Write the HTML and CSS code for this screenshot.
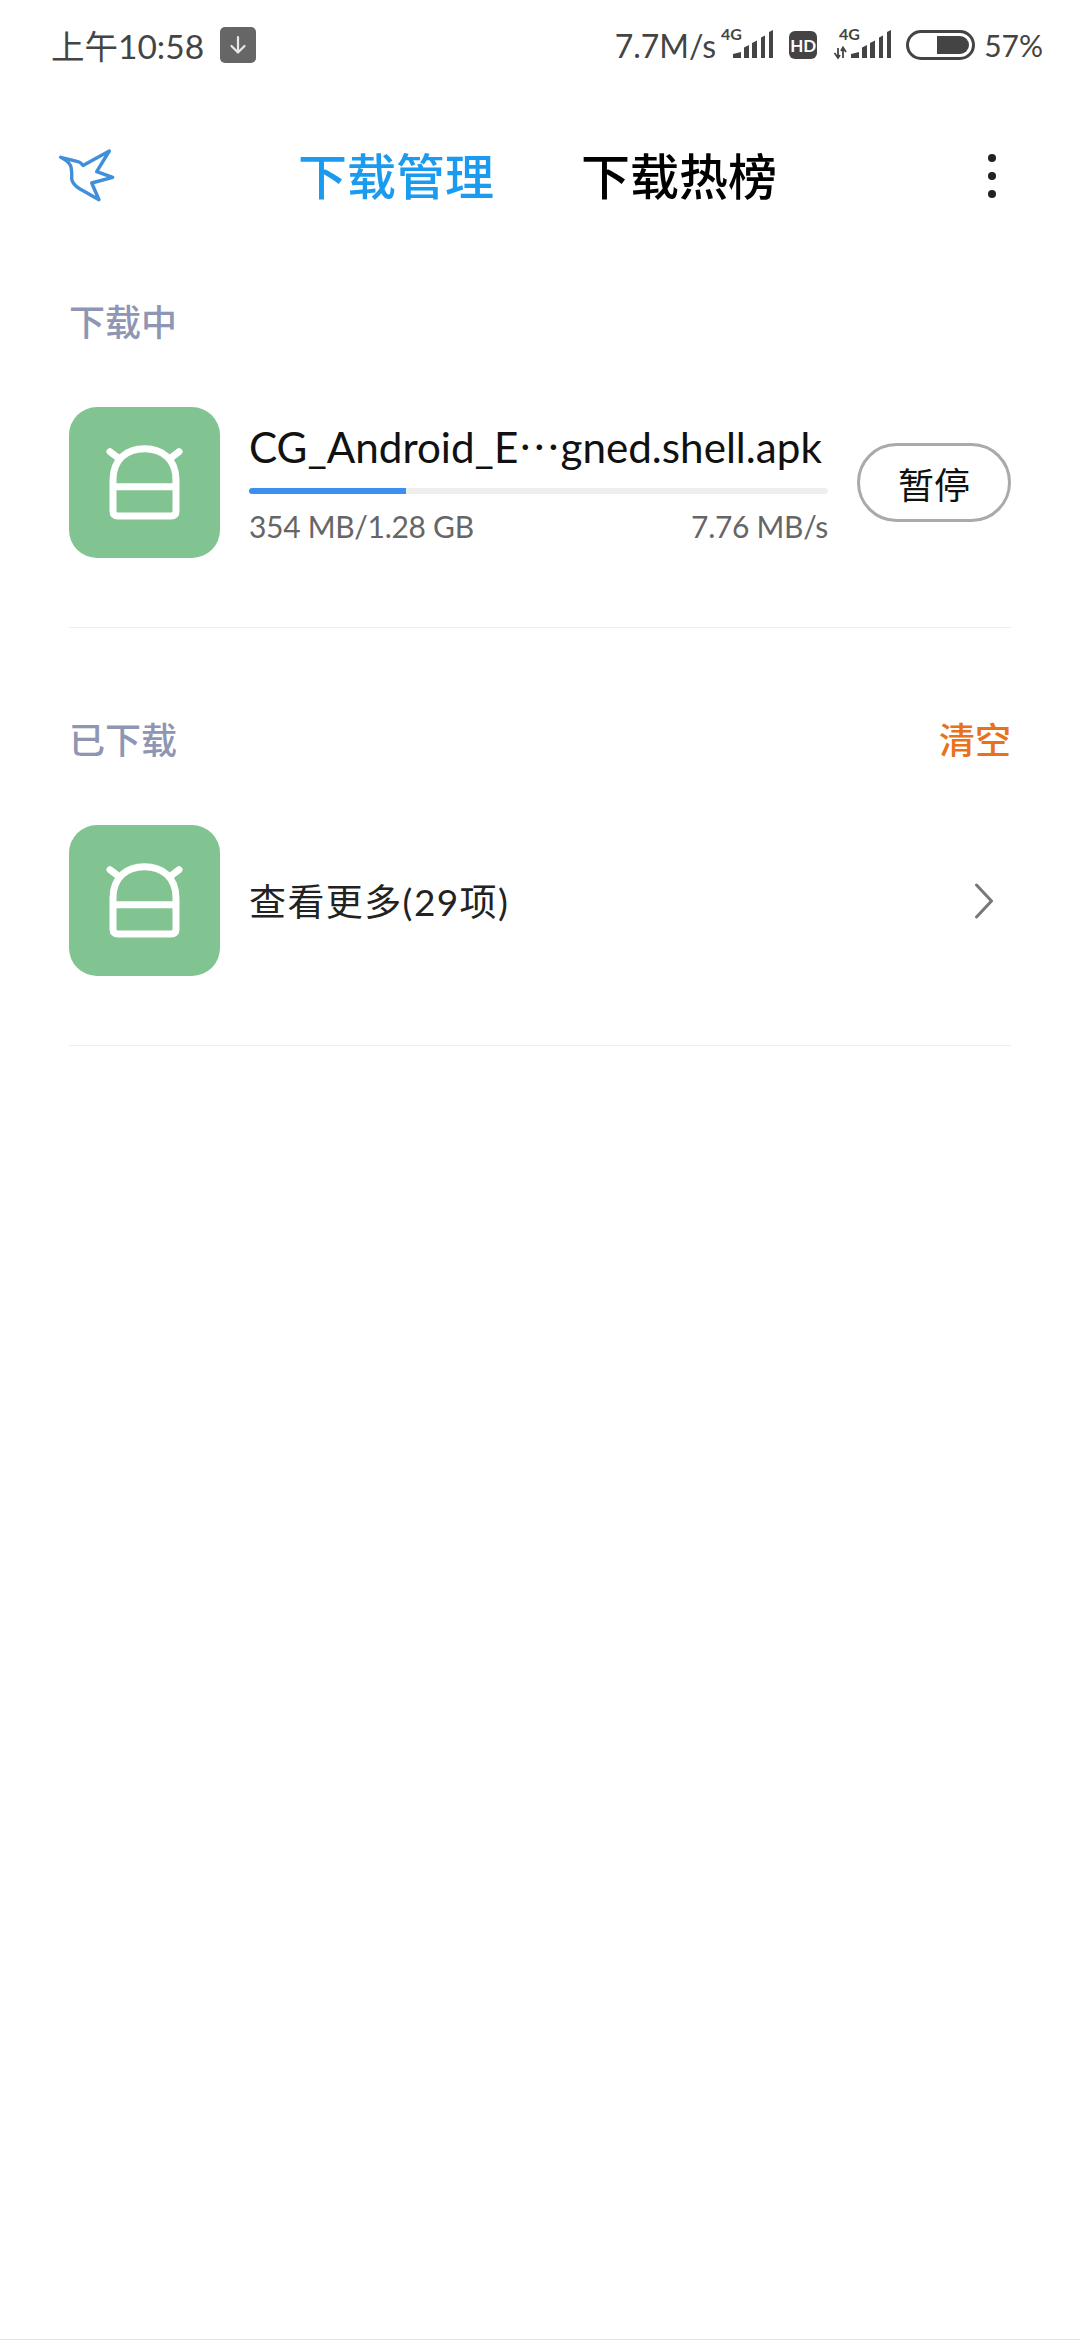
FILE: index.html
```html
<!DOCTYPE html>
<html lang="zh-CN">
<head>
<meta charset="utf-8">
<title>下载管理</title>
<link rel="stylesheet" href="styles.css">
</head>
<body>
<div class="page">
  <header class="status">
    <span class="status-time">上午10:58</span>
    <span class="dl-badge"><svg width="36" height="36" viewBox="0 0 36 36"><path d="M18 10V25M11.500 19L18 25.500L24.500 19" fill="none" stroke="#e8e8e8" stroke-width="2.200" stroke-linecap="round" stroke-linejoin="round"/></svg></span>
    <span class="status-right">
      <span class="status-speed">7.7M/s</span>
      <svg class="sig1" width="54" height="44" viewBox="0 -5 54 44"><text x="0" y="12" class="sig-text">4G</text><path d="M12 30V26L20 24V30ZM23 30V19.500L28 17V30ZM31 30V15L36 12.500V30ZM40 30V9.500L44 7.500V30ZM48 30V4L52 2V30Z" fill="#444"/></svg>
      <span class="hd">HD</span>
      <svg class="sig2" width="60" height="44" viewBox="0 -5 60 44"><text x="6" y="12" class="sig-text">4G</text><path d="M5 30V20M1.500 25L5 30L7 27M10 30V20M8 23L10 19.500L13 24" fill="none" stroke="#444" stroke-width="1.800"/><path d="M18 30V26L26 24V30ZM29 30V19.500L34 17V30ZM37 30V15L42 12.500V30ZM46 30V9.500L50 7.500V30ZM54 30V4L58 2V30Z" fill="#444"/></svg>
      <svg class="batt" width="69" height="30" viewBox="0 0 69 30"><rect x="1.500" y="1.500" width="66" height="27" rx="13.500" fill="none" stroke="#444" stroke-width="3"/><path d="M31 6H54A9 9 0 0 1 54 24H31Z" fill="#444"/></svg>
      <span class="status-pct">57%</span>
    </span>
  </header>

  <nav class="nav">
    <svg class="bird" width="58" height="58" viewBox="58 148 58 58"><path d="M60.700 158.300L77 162.300Q81 163 83 166.500L109.300 152L96.700 172.700L112.700 178.300L91.700 184L99 200.700L80 190Q72.500 185.500 71.700 180Q72 170 70.500 166.500Q68 162 60.700 158.300Z" fill="none" stroke="#3f8fdb" stroke-width="3.400" stroke-linejoin="round" stroke-linecap="round"/></svg>
    <span class="tab tab-active">下载管理</span>
    <span class="tab">下载热榜</span>
    <span class="dots"><i></i><i></i><i></i></span>
  </nav>

  <section class="section">
    <div class="sec-head"><span class="sec-title">下载中</span></div>
    <div class="row">
      <svg class="app" width="151" height="151" viewBox="0 0 151 151"><rect width="151" height="151" rx="28" fill="#82c491"/><path d="M44 73C44 52 58 41.700 75.500 41.700C93 41.700 107 52 107 73V104Q107 109 102 109H49Q44 109 44 104ZM44 79.700H107M41 44.700L48 50M110 44.700L103 50" fill="none" stroke="#fff" stroke-width="7" stroke-linecap="round" stroke-linejoin="round"/></svg>
      <div class="info">
        <div class="name">CG_Android_E⋯gned.shell.apk</div>
        <div class="track"><div class="fill" style="width:27.100%"></div></div>
        <div class="meta"><span>354 MB/1.28 GB</span><span>7.76 MB/s</span></div>
      </div>
      <button class="pause">暂停</button>
    </div>
  </section>

  <section class="section section-next">
    <div class="sec-head"><span class="sec-title">已下载</span><span class="clear">清空</span></div>
    <div class="row">
      <svg class="app" width="151" height="151" viewBox="0 0 151 151"><rect width="151" height="151" rx="28" fill="#82c491"/><path d="M44 73C44 52 58 41.700 75.500 41.700C93 41.700 107 52 107 73V104Q107 109 102 109H49Q44 109 44 104ZM44 79.700H107M41 44.700L48 50M110 44.700L103 50" fill="none" stroke="#fff" stroke-width="7" stroke-linecap="round" stroke-linejoin="round"/></svg>
      <span class="more">查看更多(29项)</span>
      <svg class="chev" width="20" height="36" viewBox="0 0 20 36"><path d="M2.500 2L17.500 18L2.500 34" fill="none" stroke="#777" stroke-width="3" stroke-linecap="round" stroke-linejoin="round"/></svg>
    </div>
  </section>
  <div class="bottom-line"></div>
</div>
</body>
</html>
```
FILE: styles.css
```css
* { box-sizing: border-box; }
html, body { margin: 0; padding: 0; background: #fff; }
body { font-family: Lato, "Noto Sans CJK SC", sans-serif; }
.page { width: 1080px; height: 2340px; display: flex; flex-direction: column; }

.status { height: 88px; padding: 0 37px 0 51px; display: flex; align-items: center; color: #444; flex-shrink: 0; }
.status-time { font-size: 33.500px; }
.dl-badge { width: 36px; height: 36px; margin-left: 16px; border-radius: 5px; background: #666; display: flex; margin-top: 2px; }
.status-right { margin-left: auto; display: flex; align-items: center; margin-top: 2px; }
.status-speed { font-size: 32px; }
.sig-text { font-size: 16px; font-weight: 700; fill: #444; font-family: Lato, sans-serif; }
.sig1 { margin-left: 5px; }
.hd { width: 28px; height: 28px; margin-left: 14px; border-radius: 6px; background: #444; color: #fff; font-size: 17px; font-weight: 700; display: flex; align-items: center; justify-content: center; }
.sig2 { margin-left: 16px; }
.batt { margin-left: 13px; }
.status-pct { font-size: 30px; margin-left: 9px; }

.nav { height: 176px; padding-left: 58px; padding-right: 84px; display: flex; align-items: center; flex-shrink: 0; }
.bird { flex-shrink: 0; }
.tab { font-size: 49px; font-weight: 500; color: #000; margin-left: 87px; line-height: 1; }
.tab-active { color: #1a9bf0; margin-left: 182px; }
.dots { margin-left: auto; display: flex; flex-direction: column; gap: 10px; }
.dots i { width: 8px; height: 8px; border-radius: 50%; background: #222; display: block; }

.section { margin: 0 69px; height: 364px; border-bottom: 1px solid #eee; flex-shrink: 0; }
.section-next { margin-top: 54px; }
.sec-head { height: 116px; display: flex; align-items: center; justify-content: space-between; }
.sec-title { font-size: 36px; font-weight: 500; color: #8f96b3; line-height: 1; }
.clear { font-size: 36px; font-weight: 500; color: #e8711c; line-height: 1; }
.row { margin-top: 27px; display: flex; align-items: center; height: 151px; }
.app { flex-shrink: 0; }
.info { width: 579px; margin-left: 29px; flex-shrink: 0; align-self: flex-start; margin-top: 15px; }
.name { font-size: 42.200px; color: #111; line-height: 50px; white-space: nowrap; }
.track { height: 6px; margin-top: 16px; border-radius: 3px; background: #eee; overflow: hidden; }
.fill { height: 100%; background: #3a8ff0; }
.meta { margin-top: 13px; display: flex; justify-content: space-between; font-size: 30px; letter-spacing: -0.300px; line-height: 38px; color: #666; }
.pause { width: 154px; height: 79px; margin-left: 29px; border: 3px solid #aaa; border-radius: 40px; background: #fff; font: 36px "Noto Sans CJK SC", sans-serif; color: #111; padding: 0; flex-shrink: 0; }
.more { margin-left: 29px; margin-bottom: 2px; font-size: 37px; letter-spacing: 1.400px; color: #222; }
.chev { margin-left: auto; margin-right: 17px; }
.bottom-line { margin-top: auto; height: 1px; background: #e5e5e5; flex-shrink: 0; }
```
